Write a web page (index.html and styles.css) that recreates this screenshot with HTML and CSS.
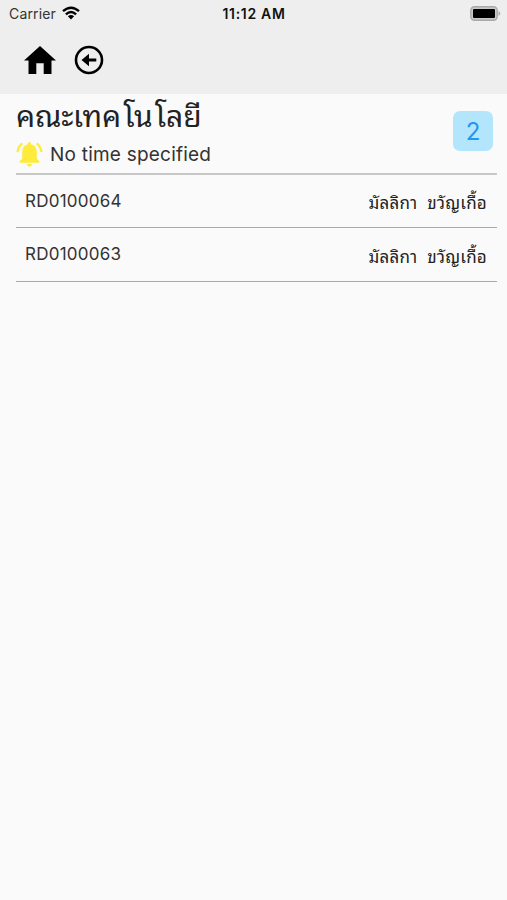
FILE: index.html
```html
<!DOCTYPE html>
<html lang="th">
<head>
<meta charset="utf-8">
<title>คณะเทคโนโลยี</title>
<link rel="stylesheet" href="styles.css">
</head>
<body>
<header class="top">
  <div class="status">
    <div class="carrier"><span>Carrier</span>
      <svg class="wifi" viewBox="0 0 18 14" fill="none" stroke="#000" stroke-width="2.4"><path d="M1 5.2Q9-1.8 17 5.2M3.9 8.3Q9 3.8 14.1 8.3"/><path d="M5.9 10.2Q9 7.6 12.1 10.2L9 13.6z" fill="#000" stroke="none"/></svg>
    </div>
    <time class="clock">11:12 AM</time>
    <svg class="battery" viewBox="0 0 31 16"><rect x=".8" y=".8" width="26.4" height="13.4" rx="3.6" fill="#c9c9c9" stroke="#aaa" stroke-width="1.4"/><rect x="3" y="3" width="22" height="9" rx="1" fill="#000"/><path d="M28.5 5Q32 7.5 28.5 10z" fill="#aaa"/></svg>
  </div>
  <nav class="nav">
    <svg class="home" viewBox="0 0 32 28"><path d="M16 0L32 14.5H27.5V28H19.7V17.3H12.3V28H4.5V14.5H0z"/></svg>
    <svg class="back" viewBox="0 0 30 30"><circle cx="15" cy="15" r="13" fill="none" stroke="#000" stroke-width="2.6"/><path d="M7.5 15L15 8.7V13.5H22.3V16.5H15V21.3z"/></svg>
  </nav>
</header>
<main class="content">
  <section class="summary">
    <div class="info">
      <h1 class="title">คณะเทค<span class="lead">โ</span>น<span class="lead">โ</span>ลยี</h1>
      <div class="notice">
        <svg class="bell" viewBox="0 0 26 26" fill="#ffeb3b"><path d="M3.5 19.6L6 17V10.4Q6.2 4.5 11.5 3.2V2.2Q13-.7 14.5 2.2V3.2Q19.8 4.5 20 10.4V17L22.5 19.6V21H3.5zM10.5 22.2H15.5Q15.2 24.7 13 24.7T10.5 22.2z"/><path d="M6 2.2Q2 5.3 1.5 10.8M20 2.2Q24 5.3 24.5 10.8" fill="none" stroke="#ffeb3b" stroke-width="2.2"/></svg>
        <span>No time specified</span>
      </div>
    </div>
    <div class="count">2</div>
  </section>
  <ul class="list">
    <li class="row"><span class="code">RD0100064</span><span class="name">มัลลิกา&nbsp; ขวัญเกื้อ</span></li>
    <li class="row"><span class="code">RD0100063</span><span class="name">มัลลิกา&nbsp; ขวัญเกื้อ</span></li>
  </ul>
</main>
</body>
</html>
```
FILE: styles.css
```css
* { box-sizing: border-box; }
body { margin: 0; min-height: 900px; background: #fafafa; color: #333; font-family: Inter, "Noto Sans Thai Looped", "Noto Looped Thai", Loma, Garuda, Waree, "Liberation Sans", sans-serif; }
svg { display: block; flex: none; }
.top { height: 94px; background: #eee; }
.status { display: grid; grid-template-columns: 1fr auto 1fr; align-items: center; height: 28px; padding: 0 7px 0 9px; font-size: 14px; line-height: 28px; }
.carrier { display: flex; align-items: center; gap: 6px; letter-spacing: .15px; }
.wifi { width: 18px; height: 14px; margin-top: -2px; }
.clock { color: #111; font-weight: 600; font-size: 14px; letter-spacing: .7px; margin-right: 1px; }
.battery { width: 31px; height: 16px; justify-self: end; margin-right: -1px; }
.nav { display: flex; align-items: center; gap: 18px; height: 63px; padding-left: 24px; }
.home { width: 32px; height: 28px; }
.back { width: 30px; height: 30px; }
.content { padding: 0 10px 0 16px; }
.summary { display: flex; justify-content: space-between; height: 81px; padding-right: 4px; border-bottom: 2px solid #c8c8c8; }
.title { margin: 0; height: 46px; color: #222; font-size: 30px; line-height: 44px; font-weight: 400; white-space: nowrap; letter-spacing: -.1px; }
.lead { margin-left: 2.5px; }
.notice { display: flex; align-items: center; gap: 7px; height: 28px; font-size: 19px; letter-spacing: .22px; }
.bell { width: 27px; height: 27px; }
.count { width: 40px; height: 40px; margin-top: 17px; border-radius: 7px; background: #b3e5fc; color: #2196f3; font-size: 24px; line-height: 41px; text-align: center; }
.list { margin: 0; padding: 0; list-style: none; }
.row { display: flex; justify-content: space-between; align-items: center; height: 54px; padding: 0 10px 1px 9px; border-bottom: 1px solid #aaa; }
.row:first-child { height: 53px; }
.code { font-size: 17px; letter-spacing: .25px; }
.name { margin-top: 2px; color: #222; font-size: 17px; letter-spacing: .2px; white-space: nowrap; }
```
